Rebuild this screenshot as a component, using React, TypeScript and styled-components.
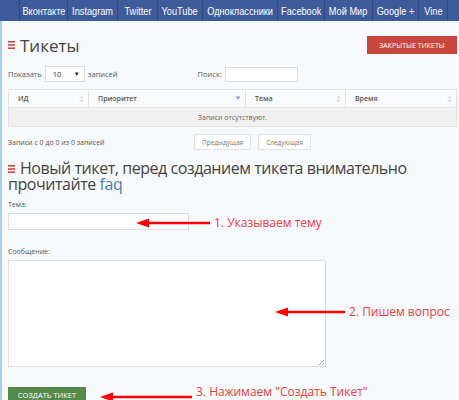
import React from "react";
import styled, { createGlobalStyle } from "styled-components";

const GlobalStyle = createGlobalStyle`
  html, body {
    margin: 0;
    padding: 0;
    background: #f7fafd;
    font-family: "Open Sans", "Liberation Sans", sans-serif;
    color: #555;
  }
`;

const socials: [string, number][] = [
  ["Вконтакте", 48],
  ["Instagram", 50],
  ["Twitter", 40],
  ["YouTube", 45],
  ["Одноклассники", 75],
  ["Facebook", 47],
  ["Мой Мир", 48],
  ["Google +", 46],
  ["Vine", 29],
];

function BurgerIcon() {
  return (
    <BurgerSvg width="7" height="8" viewBox="0 0 7 8">
      <rect x="0" y="0" width="7" height="1.6" fill="#d2453b" />
      <rect x="0" y="3.2" width="7" height="1.6" fill="#d2453b" />
      <rect x="0" y="6.4" width="7" height="1.6" fill="#d2453b" />
    </BurgerSvg>
  );
}

function SortIcon({ active }: { active?: boolean }) {
  if (active) {
    return (
      <svg width="6" height="6" viewBox="0 0 6 6">
        <path d="M0.5 1.5 L5.5 1.5 L3 4.5 Z" fill="#8a8fd8" />
      </svg>
    );
  }
  return (
    <svg width="5" height="8" viewBox="0 0 5 8">
      <path d="M0.5 3.3 L4.5 3.3 L2.5 0.5 Z" fill="#ddd" />
      <path d="M0.5 4.7 L4.5 4.7 L2.5 7.5 Z" fill="#ddd" />
    </svg>
  );
}

function Arrow({ width }: { width: number }) {
  return (
    <svg width={width} height="10" viewBox={`0 0 ${width} 10`}>
      <path d={`M0 5 L13 0.5 L13 3.8 L${width} 3.8 L${width} 6.2 L13 6.2 L13 9.5 Z`} fill="#f00" />
    </svg>
  );
}

export default function App() {
  return (
    <>
      <GlobalStyle />
      <Page>
        <Nav>
          <NavSpacer />
          {socials.map(([s, w]) => (
            <NavItem key={s} $w={w}>
              <NavText>{s}</NavText>
            </NavItem>
          ))}
        </Nav>
        <Content>
          <TitleRow>
            <Title>
              <BurgerIcon />
              Тикеты
            </Title>
            <RedButton>Закрытые тикеты</RedButton>
          </TitleRow>

          <Controls>
            <Small>
              Показать
              <Select>
                <span>10</span>
                <Caret>▼</Caret>
              </Select>
              записей
            </Small>
            <Small>
              Поиск:
              <SearchInput />
            </Small>
          </Controls>

          <Table>
            <colgroup>
              <col style={{ width: 80 }} />
              <col style={{ width: 157 }} />
              <col style={{ width: 100 }} />
              <col />
            </colgroup>
            <thead>
              <tr>
                <Th>
                  ИД <SortIcon />
                </Th>
                <Th>
                  Приоритет <SortIcon active />
                </Th>
                <Th>
                  Тема <SortIcon />
                </Th>
                <Th>
                  Время <SortIcon />
                </Th>
              </tr>
            </thead>
            <tbody>
              <tr>
                <EmptyCell colSpan={4}>Записи отсутствуют.</EmptyCell>
              </tr>
            </tbody>
          </Table>

          <InfoRow>
            <InfoText>Записи с 0 до 0 из 0 записей</InfoText>
            <Pager>
              <PageButton>Предыдущая</PageButton>
              <PageButton>Следующая</PageButton>
            </Pager>
          </InfoRow>

          <Heading>
            <BurgerIcon />
            Новый тикет, перед созданием тикета внимательно прочитайте{" "}
            <Link>faq</Link>
          </Heading>

          <Field>
            <Label>Тема:</Label>
            <TextInput />
          </Field>
          <Field $gap={17}>
            <Label>Сообщение:</Label>
            <TextArea />
          </Field>
          <GreenButton>Создать тикет</GreenButton>
        </Content>

        <Note $top={214} $left={136}>
          <Arrow width={74} />
          <NoteText>1. Указываем тему</NoteText>
        </Note>
        <Note $top={303} $left={275}>
          <Arrow width={70} />
          <NoteText>2. Пишем вопрос</NoteText>
        </Note>
        <Note $top={388} $left={100}>
          <Arrow width={92} />
          <NoteText $raise>3. Нажимаем "Создать Тикет"</NoteText>
        </Note>
      </Page>
    </>
  );
}

const Page = styled.div`
  position: relative;
  width: 459px;
  height: 400px;
  overflow: hidden;
`;

const Nav = styled.nav`
  display: flex;
  height: 21px;
  background: #3d5b9a;
  font-family: "Liberation Sans", Arial, sans-serif;
`;

const NavSpacer = styled.div`
  width: 19px;
  border-right: 1px solid #2f4a82;
`;

const NavItem = styled.div<{ $w: number }>`
  display: flex;
  align-items: center;
  justify-content: center;
  width: ${(p) => p.$w - 1}px;
  border-right: 1px solid #2f4a82;
  overflow: hidden;
`;

const NavText = styled.span`
  color: #fff;
  font-size: 11.5px;
  white-space: nowrap;
  transform: scaleX(0.8);
`;

const Content = styled.div`
  border-left: 2px solid #a9cdee;
  padding: 15px 2px 0 6px;
  min-height: 400px;
`;

const TitleRow = styled.div`
  display: flex;
  justify-content: space-between;
  align-items: center;
  height: 18px;
`;

const BurgerSvg = styled.svg`
  margin-right: 5px;
  vertical-align: 1px;
`;

const Title = styled.h1`
  margin: 0;
  font-size: 17px;
  font-weight: 400;
  color: #444;
  display: flex;
  align-items: center;
`;

const RedButton = styled.button`
  height: 18px;
  width: 90px;
  padding: 0;
  border: none;
  background: #c9463d;
  color: #fff;
  font-family: "Open Sans", sans-serif;
  font-size: 7px;
  text-transform: uppercase;
`;

const Controls = styled.div`
  display: flex;
  align-items: center;
  gap: 80px;
  margin-top: 12px;
  height: 16px;
`;

const Small = styled.div`
  display: flex;
  align-items: center;
  gap: 3px;
  font-size: 7.5px;
  color: #555;
`;

const Select = styled.div`
  display: flex;
  justify-content: space-between;
  align-items: center;
  width: 27px;
  height: 14px;
  padding: 0 4px 0 7px;
  border: 1px solid #ddd;
  background: #fff;
  color: #333;
`;

const Caret = styled.span`
  font-size: 6px;
  color: #222;
`;

const SearchInput = styled.div`
  width: 71px;
  height: 13px;
  border: 1px solid #ddd;
  background: #fff;
`;

const Table = styled.table`
  width: 449px;
  margin-top: 7px;
  border-collapse: collapse;
  table-layout: fixed;
  font-size: 7px;
`;

const Th = styled.th`
  height: 17px;
  padding: 0 4px 0 9px;
  border: 1px solid #e3e3e3;
  background: #f9fbfd;
  text-align: left;
  font-weight: 600;
  color: #555;
  position: relative;

  svg {
    position: absolute;
    right: 4px;
    top: 5px;
  }
`;

const EmptyCell = styled.td`
  height: 16px;
  border: 1px solid #e3e3e3;
  background: #f1f1f1;
  text-align: center;
  color: #666;
`;

const InfoRow = styled.div`
  display: flex;
  align-items: center;
  margin-top: 7px;
  height: 16px;
`;

const InfoText = styled.div`
  width: 186px;
  font-size: 7px;
  color: #555;
`;

const Pager = styled.div`
  display: flex;
  gap: 7px;
`;

const PageButton = styled.button`
  height: 16px;
  padding: 0 7px;
  border: 1px solid #e3e3e3;
  background: #fff;
  font-family: "Open Sans", sans-serif;
  font-size: 6.5px;
  color: #777;
`;

const Heading = styled.h2`
  margin: 10px 0 0;
  font-size: 16px;
  line-height: 16px;
  letter-spacing: -0.45px;
  font-weight: 400;
  color: #444;
`;

const Link = styled.span`
  color: #4a7cb8;
`;

const Field = styled.div<{ $gap?: number }>`
  display: flex;
  flex-direction: column;
  margin-top: ${(p) => p.$gap ?? 8}px;
`;

const Label = styled.label`
  font-size: 7px;
  line-height: 10px;
  color: #555;
  margin-bottom: 3px;
`;

const TextInput = styled.div`
  width: 179px;
  height: 15px;
  border: 1px solid #ddd;
  background: #fff;
`;

const TextArea = styled.div`
  width: 316px;
  height: 105px;
  border: 1px solid #ddd;
  background: #fff;
  position: relative;
  &::after {
    content: "";
    position: absolute;
    right: 1px;
    bottom: 1px;
    width: 5px;
    height: 5px;
    background: linear-gradient(135deg, transparent 45%, #aaa 45%, #aaa 55%, transparent 55%, transparent 70%, #aaa 70%, #aaa 80%, transparent 80%);
  }
`;

const GreenButton = styled.button`
  margin-top: 20px;
  width: 78px;
  height: 18px;
  padding: 0 0 2px;
  border: none;
  background: #568a4c;
  color: #fff;
  font-family: "Open Sans", sans-serif;
  font-size: 7.5px;
  text-transform: uppercase;
`;

const Note = styled.div<{ $top: number; $left: number }>`
  position: absolute;
  top: ${(p) => p.$top}px;
  left: ${(p) => p.$left}px;
  display: flex;
  align-items: center;
  gap: 4px;
`;

const NoteText = styled.span<{ $raise?: boolean }>`
  color: #f3393a;
  font-size: 12px;
  white-space: nowrap;
  transform: translateY(${(p) => (p.$raise ? "-5px" : "0")});
`;
